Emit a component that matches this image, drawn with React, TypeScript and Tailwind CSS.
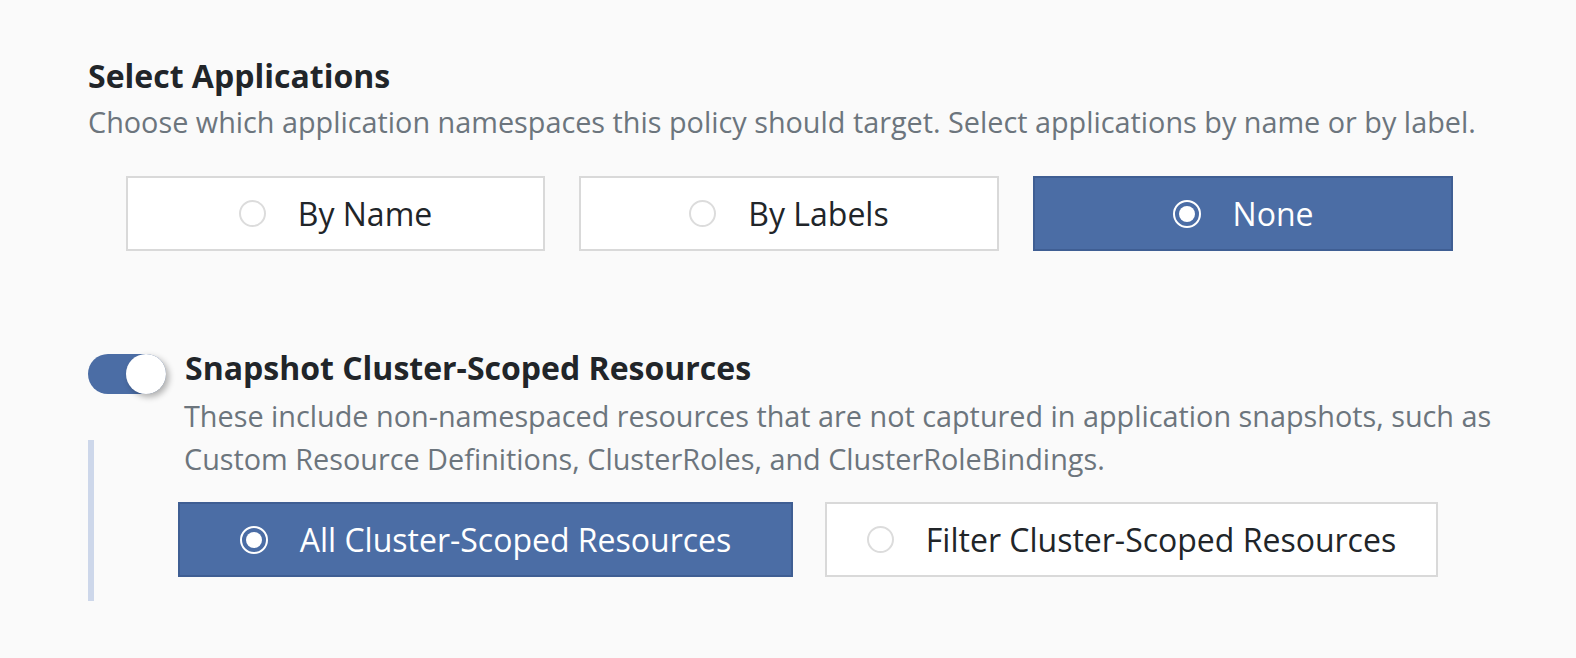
import React from "react";

function Radio({ checked }: { checked: boolean }) {
  if (checked) {
    return (
      <span className="flex h-[28px] w-[28px] shrink-0 items-center justify-center rounded-full border-[2px] border-white">
        <span className="h-[16px] w-[16px] rounded-full bg-white" />
      </span>
    );
  }
  return <span className="h-[27px] w-[27px] shrink-0 rounded-full border-[2px] border-[#dcdcdc] bg-white" />;
}

function Option({ label, checked, width }: { label: string; checked: boolean; width: string }) {
  return (
    <div
      className={
        "flex h-[75px] items-center justify-center gap-[32px] border-[2px] text-[32px] " +
        width +
        (checked ? " border-[#3f5e93] bg-[#4b6da5] text-white" : " border-[#d9d9d9] bg-white text-[#212529]")
      }
    >
      <Radio checked={checked} />
      <span className="leading-[44px]">{label}</span>
    </div>
  );
}

export default function App() {
  return (
    <div
      className="min-h-[658px] w-full bg-[#fafafa] pl-[88px] pt-[54px]"
      style={{ fontFamily: '"Open Sans", "Noto Sans", sans-serif' }}
    >
      <h2 className="text-[32px] font-bold leading-[44px] text-[#212529]">Select Applications</h2>
      <p className="mt-[4px] text-[28.8px] leading-[40px] text-[#6c757d]">
        Choose which application namespaces this policy should target. Select applications by name or by label.
      </p>
      <div className="mt-[34px] flex gap-[34px] pl-[38px]">
        <Option label="By Name" checked={false} width="w-[419px]" />
        <Option label="By Labels" checked={false} width="w-[420px]" />
        <Option label="None" checked={true} width="w-[420px]" />
      </div>

      <div className="mt-[95px] flex items-start gap-[19px]">
        <div className="mt-[8px] flex h-[40px] w-[78px] shrink-0 items-center justify-end rounded-full bg-[#4b6da5]">
          <span className="h-[40px] w-[40px] rounded-full bg-white shadow-[3px_3px_6px_rgba(0,0,0,0.3)]" />
        </div>
        <h3 className="text-[32px] font-bold leading-[44px] text-[#212529]">Snapshot Cluster-Scoped Resources</h3>
      </div>
      <div className="pl-[96px]">
        <p className="w-[1360px] text-[28.8px] leading-[43px] text-[#6c757d]">
          These include non-namespaced resources that are not captured in application snapshots, such as Custom
          Resource Definitions, ClusterRoles, and ClusterRoleBindings.
        </p>
      </div>
      <div className="mt-[-40px] border-l-[6px] border-[#cdd7ea] pb-[24px] pl-[84px] pt-[62px]">
        <div className="flex gap-[32px]">
          <Option label="All Cluster-Scoped Resources" checked={true} width="w-[615px]" />
          <Option label="Filter Cluster-Scoped Resources" checked={false} width="w-[613px]" />
        </div>
      </div>
    </div>
  );
}
